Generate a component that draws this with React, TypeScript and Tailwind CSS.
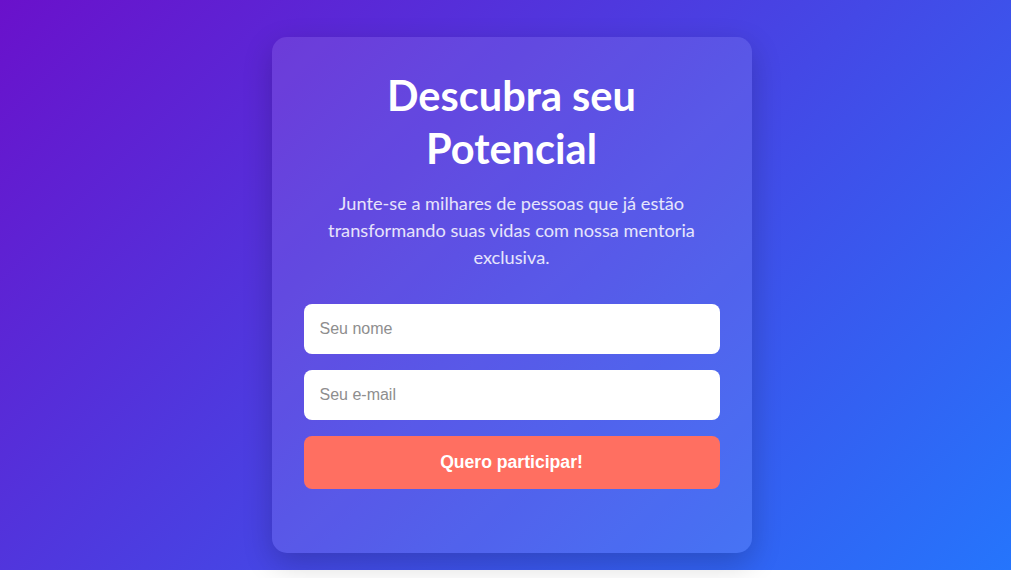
import React from "react";

export default function App() {
  return (
    <div className="w-[1011px] h-[578px] bg-white">
      <div className="h-[570px] w-full bg-[linear-gradient(135deg,#6a11cb_0%,#2575fc_100%)] flex justify-center pt-[37px] pl-3">
        <div className="w-[480px] h-[516px] rounded-[15px] bg-white/10 shadow-[0_10px_30px_rgba(0,0,0,0.2)] px-8 pt-8 flex flex-col items-center">
          <h1 className="text-white text-[41.5px] leading-[53px] font-bold text-center font-['Lato',sans-serif] px-[40px]">
            Descubra seu Potencial
          </h1>
          <p className="mt-[15px] text-white/85 text-[18.2px] leading-[27px] text-center font-['Lato',sans-serif]">
            Junte-se a milhares de pessoas que já estão transformando suas vidas com nossa mentoria exclusiva.
          </p>
          <form className="mt-[33px] w-full flex flex-col gap-4" onSubmit={(e) => e.preventDefault()}>
            <input
              type="text"
              placeholder="Seu nome"
              className="w-full h-[50px] rounded-lg bg-white px-4 text-[16px] font-['Liberation_Sans',Arial,sans-serif] placeholder:text-[#8e8e8e] outline-none"
            />
            <input
              type="email"
              placeholder="Seu e-mail"
              className="w-full h-[50px] rounded-lg bg-white px-4 text-[16px] font-['Liberation_Sans',Arial,sans-serif] placeholder:text-[#8e8e8e] outline-none"
            />
            <button
              type="submit"
              className="w-full h-[53px] rounded-lg bg-[#ff6f61] text-white font-bold text-[17.6px] font-['Liberation_Sans',Arial,sans-serif]"
            >
              Quero participar!
            </button>
          </form>
        </div>
      </div>
    </div>
  );
}
